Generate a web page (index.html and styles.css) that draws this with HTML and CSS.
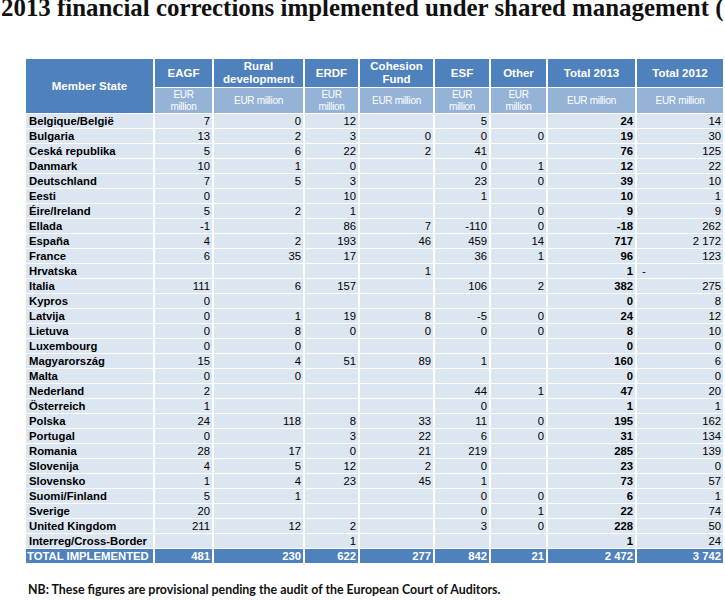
FILE: index.html
```html
<!DOCTYPE html>
<html>
<head>
<meta charset="utf-8">
<link rel="stylesheet" href="styles.css">
</head>
<body>
<div class="title">2013 financial corrections implemented under shared management (</div>
<table class="grid">
<colgroup>
<col class="w-ms"><col class="w-eagf"><col class="w-rural"><col class="w-erdf"><col class="w-coh"><col class="w-esf"><col class="w-oth"><col class="w-t13"><col class="w-t12">
</colgroup>
<thead>
<tr class="hrow1">
<th rowspan="2" class="ms-head">Member State</th>
<th>EAGF</th><th>Rural<br>development</th><th>ERDF</th><th>Cohesion<br>Fund</th><th>ESF</th><th>Other</th><th>Total 2013</th><th>Total 2012</th>
</tr>
<tr class="hrow2">
<th>EUR<br>million</th><th>EUR million</th><th>EUR<br>million</th><th>EUR million</th><th>EUR<br>million</th><th>EUR<br>million</th><th>EUR million</th><th>EUR million</th>
</tr>
</thead>
<tbody>
<tr><td>Belgique/België</td><td>7</td><td>0</td><td>12</td><td></td><td>5</td><td></td><td class="b">24</td><td>14</td></tr>
<tr><td>Bulgaria</td><td>13</td><td>2</td><td>3</td><td>0</td><td>0</td><td>0</td><td class="b">19</td><td>30</td></tr>
<tr><td>Ceská republika</td><td>5</td><td>6</td><td>22</td><td>2</td><td>41</td><td></td><td class="b">76</td><td>125</td></tr>
<tr><td>Danmark</td><td>10</td><td>1</td><td>0</td><td></td><td>0</td><td>1</td><td class="b">12</td><td>22</td></tr>
<tr><td>Deutschland</td><td>7</td><td>5</td><td>3</td><td></td><td>23</td><td>0</td><td class="b">39</td><td>10</td></tr>
<tr><td>Eesti</td><td>0</td><td></td><td>10</td><td></td><td>1</td><td></td><td class="b">10</td><td>1</td></tr>
<tr><td>Éire/Ireland</td><td>5</td><td>2</td><td>1</td><td></td><td></td><td>0</td><td class="b">9</td><td>9</td></tr>
<tr><td>Ellada</td><td>-1</td><td></td><td>86</td><td>7</td><td>-110</td><td>0</td><td class="b">-18</td><td>262</td></tr>
<tr><td>España</td><td>4</td><td>2</td><td>193</td><td>46</td><td>459</td><td>14</td><td class="b">717</td><td>2 172</td></tr>
<tr><td>France</td><td>6</td><td>35</td><td>17</td><td></td><td>36</td><td>1</td><td class="b">96</td><td>123</td></tr>
<tr><td>Hrvatska</td><td></td><td></td><td></td><td>1</td><td></td><td></td><td class="b">1</td><td class="dash">-</td></tr>
<tr><td>Italia</td><td>111</td><td>6</td><td>157</td><td></td><td>106</td><td>2</td><td class="b">382</td><td>275</td></tr>
<tr><td>Kypros</td><td>0</td><td></td><td></td><td></td><td></td><td></td><td class="b">0</td><td>8</td></tr>
<tr><td>Latvija</td><td>0</td><td>1</td><td>19</td><td>8</td><td>-5</td><td>0</td><td class="b">24</td><td>12</td></tr>
<tr><td>Lietuva</td><td>0</td><td>8</td><td>0</td><td>0</td><td>0</td><td>0</td><td class="b">8</td><td>10</td></tr>
<tr><td>Luxembourg</td><td>0</td><td>0</td><td></td><td></td><td></td><td></td><td class="b">0</td><td>0</td></tr>
<tr><td>Magyarország</td><td>15</td><td>4</td><td>51</td><td>89</td><td>1</td><td></td><td class="b">160</td><td>6</td></tr>
<tr><td>Malta</td><td>0</td><td>0</td><td></td><td></td><td></td><td></td><td class="b">0</td><td>0</td></tr>
<tr><td>Nederland</td><td>2</td><td></td><td></td><td></td><td>44</td><td>1</td><td class="b">47</td><td>20</td></tr>
<tr><td>Österreich</td><td>1</td><td></td><td></td><td></td><td>0</td><td></td><td class="b">1</td><td>1</td></tr>
<tr><td>Polska</td><td>24</td><td>118</td><td>8</td><td>33</td><td>11</td><td>0</td><td class="b">195</td><td>162</td></tr>
<tr><td>Portugal</td><td>0</td><td></td><td>3</td><td>22</td><td>6</td><td>0</td><td class="b">31</td><td>134</td></tr>
<tr><td>Romania</td><td>28</td><td>17</td><td>0</td><td>21</td><td>219</td><td></td><td class="b">285</td><td>139</td></tr>
<tr><td>Slovenija</td><td>4</td><td>5</td><td>12</td><td>2</td><td>0</td><td></td><td class="b">23</td><td>0</td></tr>
<tr><td>Slovensko</td><td>1</td><td>4</td><td>23</td><td>45</td><td>1</td><td></td><td class="b">73</td><td>57</td></tr>
<tr><td>Suomi/Finland</td><td>5</td><td>1</td><td></td><td></td><td>0</td><td>0</td><td class="b">6</td><td>1</td></tr>
<tr><td>Sverige</td><td>20</td><td></td><td></td><td></td><td>0</td><td>1</td><td class="b">22</td><td>74</td></tr>
<tr><td>United Kingdom</td><td>211</td><td>12</td><td>2</td><td></td><td>3</td><td>0</td><td class="b">228</td><td>50</td></tr>
<tr><td>Interreg/Cross-Border</td><td></td><td></td><td>1</td><td></td><td></td><td></td><td class="b">1</td><td>24</td></tr>
<tr class="total"><td>TOTAL IMPLEMENTED</td><td>481</td><td>230</td><td>622</td><td>277</td><td>842</td><td>21</td><td>2 472</td><td>3 742</td></tr>
</tbody>
</table>
<p class="note">NB: These figures are provisional pending the audit of the European Court of Auditors.</p>
</body>
</html>
```

FILE: styles.css
```css
html, body {
  margin: 0;
  padding: 0;
  background: #ffffff;
}
body {
  width: 725px;
  overflow: hidden;
  font-family: "Liberation Sans", Arial, sans-serif;
  color: #000000;
}
.title {
  font-family: "Liberation Serif", "Times New Roman", serif;
  font-weight: bold;
  font-size: 24.9px;
  line-height: 16px;
  white-space: nowrap;
  overflow: hidden;
  padding: 0 0 6px 1px;
  color: #111111;
}
.grid {
  table-layout: fixed;
  width: 701px;
  margin: 36px 0 0 24px;
  border-collapse: separate;
  border-spacing: 2px 1px;
  background: #ffffff;
}
.w-ms { width: 127px; }
.w-eagf { width: 57px; }
.w-rural { width: 89px; }
.w-erdf { width: 53px; }
.w-coh { width: 73px; }
.w-esf { width: 54px; }
.w-oth { width: 55px; }
.w-t13 { width: 87px; }
.w-t12 { width: 86px; }

.grid th, .grid td {
  box-sizing: border-box;
  padding: 0;
  vertical-align: middle;
  overflow: hidden;
  white-space: nowrap;
}
.grid th {
  color: #ffffff;
  text-align: center;
  font-weight: bold;
}
.hrow1 th {
  background: #4f81bd;
  height: 28px;
  font-size: 11.5px;
  line-height: 13px;
}
.hrow2 th {
  background: #95b3d7;
  height: 25px;
  font-size: 10px;
  line-height: 12px;
  font-weight: normal;
  letter-spacing: -0.3px;
}
.grid td {
  background: #dce6f1;
  height: 14px;
  font-size: 11.3px;
  line-height: 14px;
  text-align: right;
  padding-right: 2px;
}
.grid td:first-child {
  text-align: left;
  font-weight: bold;
  padding-left: 3px;
  padding-right: 0;
}
.grid td.b {
  font-weight: bold;
}
.grid td.dash {
  text-align: left;
  padding-left: 5px;
}
.total td {
  background: #4f81bd;
  color: #ffffff;
  font-weight: bold;
}
.total td:first-child {
  padding-left: 1px;
}
.note {
  margin: 18px 0 0 28px;
  font-family: Lato, "Liberation Sans", sans-serif;
  font-weight: bold;
  font-size: 12.4px;
  line-height: 16px;
  color: #111111;
}
```
